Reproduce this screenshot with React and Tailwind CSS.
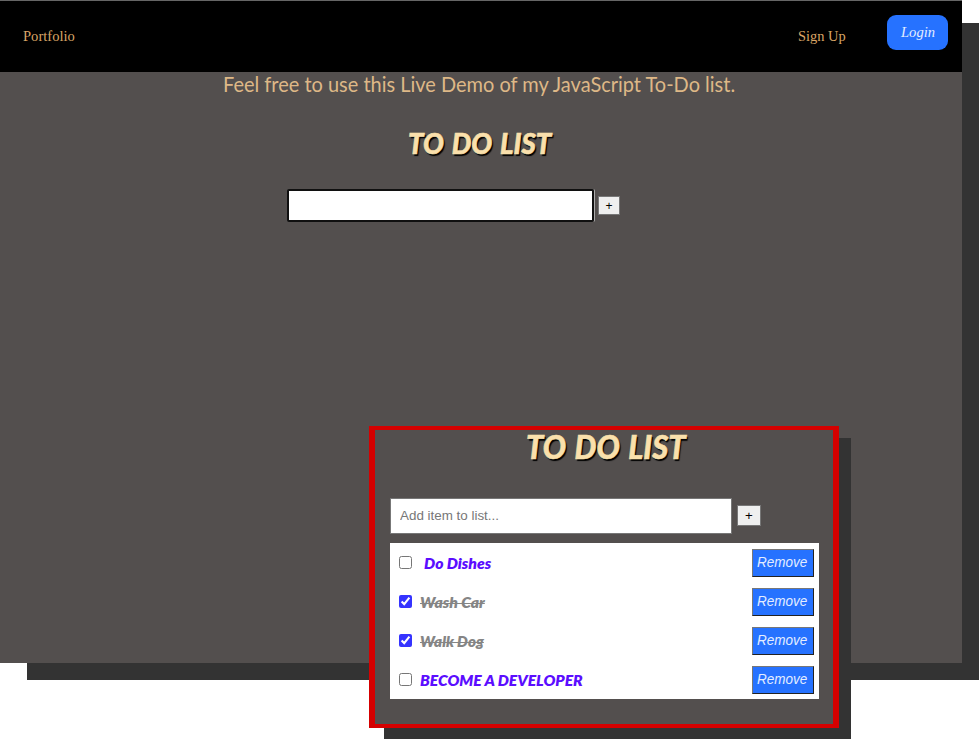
import React from "react";

const items = [
  { label: "Do Dishes", done: false, indent: "pl-3", width: 67 },
  { label: "Wash Car", done: true, indent: "pl-2", width: 65 },
  { label: "Walk Dog", done: true, indent: "pl-2", width: 64 },
  { label: "BECOME A DEVELOPER", done: false, indent: "pl-2", width: 163 },
];

// Sets a line of text to an exact width, independent of the font's own advance widths.
function FitText({ width, className = "", children }) {
  const inner = React.useRef(null);
  const [scale, setScale] = React.useState(1);
  React.useLayoutEffect(() => {
    setScale(width / inner.current.offsetWidth);
  }, [width]);
  return (
    <span className="block shrink-0" style={{ width }}>
      <span
        ref={inner}
        className={`inline-block origin-left whitespace-nowrap ${className}`}
        style={{ transform: `scaleX(${scale})` }}
      >
        {children}
      </span>
    </span>
  );
}

function Title({ width, className }) {
  return (
    <h1 className="font-[Lato,sans-serif] font-black italic text-[#fae0ac] [-webkit-text-stroke:0.6px_#fae0ac] [text-shadow:1.5px_2px_1px_#000] [word-spacing:2px]">
      <FitText width={width} className={className}>TO DO LIST</FitText>
    </h1>
  );
}

function Task({ item }) {
  return (
    <li className="flex h-[39px] items-center pr-[5px] pl-[9px]">
      <input
        type="checkbox"
        readOnly
        checked={item.done}
        className="m-0 h-[13px] w-[13px] shrink-0 accent-[#3533ff]"
      />
      <div
        className={`flex-1 font-[Lato,sans-serif] text-[15.5px] leading-5 font-extrabold italic ${item.indent} ${
          item.done ? "text-[#858585]" : "text-[#5b0dff]"
        }`}
      >
        <FitText width={item.width} className={item.done ? "line-through decoration-1" : ""}>
          {item.label}
        </FitText>
      </div>
      <button className="h-7 w-[62px] border border-t-[#777] border-r-[#222] border-b-[#222] border-l-[#777] bg-[#2672ff] pb-px pl-[4.5px] text-left text-sm leading-5 text-[#e4edff] italic">
        <FitText width={50}>Remove</FitText>
      </button>
    </li>
  );
}

export default function App() {
  return (
    <div className="relative h-[739px] w-[979px] overflow-hidden bg-white font-['Liberation_Sans',Arial,sans-serif]">
      <main className="h-[662.5px] w-[962px] bg-[#534f4e] shadow-[24px_20px_0_-3px_#333]">
        <nav className="flex h-[72px] items-start border-t border-[#666] bg-black pr-3.5 pl-[23.4px] font-['Liberation_Serif',serif] text-[15px] leading-5 text-[#d9a566]">
          <a className="mt-[25px]">
            <FitText width={51.5}>Portfolio</FitText>
          </a>
          <a className="mt-[25px] mr-[40.5px] ml-auto">
            <FitText width={48}>Sign Up</FitText>
          </a>
          <button className="mt-3.5 flex h-[35px] w-[61.5px] justify-center rounded-[9px] bg-[#2672ff] pt-[7px] pl-px text-[#e4edff] italic">
            <FitText width={34}>Login</FitText>
          </button>
        </nav>
        <p className="flex h-6 justify-center pr-[5px] font-[Lato,sans-serif] text-[22px] leading-6 text-[#deb887]">
          <FitText width={512}>Feel free to use this Live Demo of my JavaScript To-Do list.</FitText>
        </p>
        <div className="mt-[27px] ml-[408px]">
          <Title width={143} className="text-[28px] leading-10" />
        </div>
        <div className="mt-[26px] ml-[286.5px] flex items-center">
          <div className="rounded-[2px] border-r border-[#aaa]">
            <input className="block h-[33px] w-[307.5px] rounded-[2px] border-2 border-[#101010] bg-white outline-none" />
          </div>
          <button className="ml-[3px] flex h-[19px] w-[22px] items-center justify-center border border-[#777] bg-[#efefef] pt-px text-[12px] leading-3 text-black">
            +
          </button>
        </div>
      </main>

      <section className="absolute top-[426px] left-[369px] h-[302px] w-[469.5px] border-x-6 border-y-4 border-[#d50000] bg-[#534f4e] pr-[14px] pl-[15px] shadow-[13.5px_10.5px_0_-1.5px_#333,13.5px_14px_0_-1.5px_#333]">
        <div className="-mt-[5px] ml-[135.5px]">
          <Title width={159} className="text-[32px] leading-[44px]" />
        </div>
        <div className="mt-[28.5px] flex items-center">
          <input
            placeholder="Add item to list..."
            className="h-9 w-[342px] border border-[#777] bg-white px-[9px] text-[13.4px] outline-none placeholder:text-[#777]"
          />
          <button className="ml-[5px] flex h-[21px] w-6 items-center justify-center border border-[#777] bg-[#efefef] text-[13.3px] leading-4 text-black">
            +
          </button>
        </div>
        <ul className="mt-[9.5px] w-[428.5px] bg-white">
          {items.map((item) => (
            <Task key={item.label} item={item} />
          ))}
        </ul>
      </section>
    </div>
  );
}
